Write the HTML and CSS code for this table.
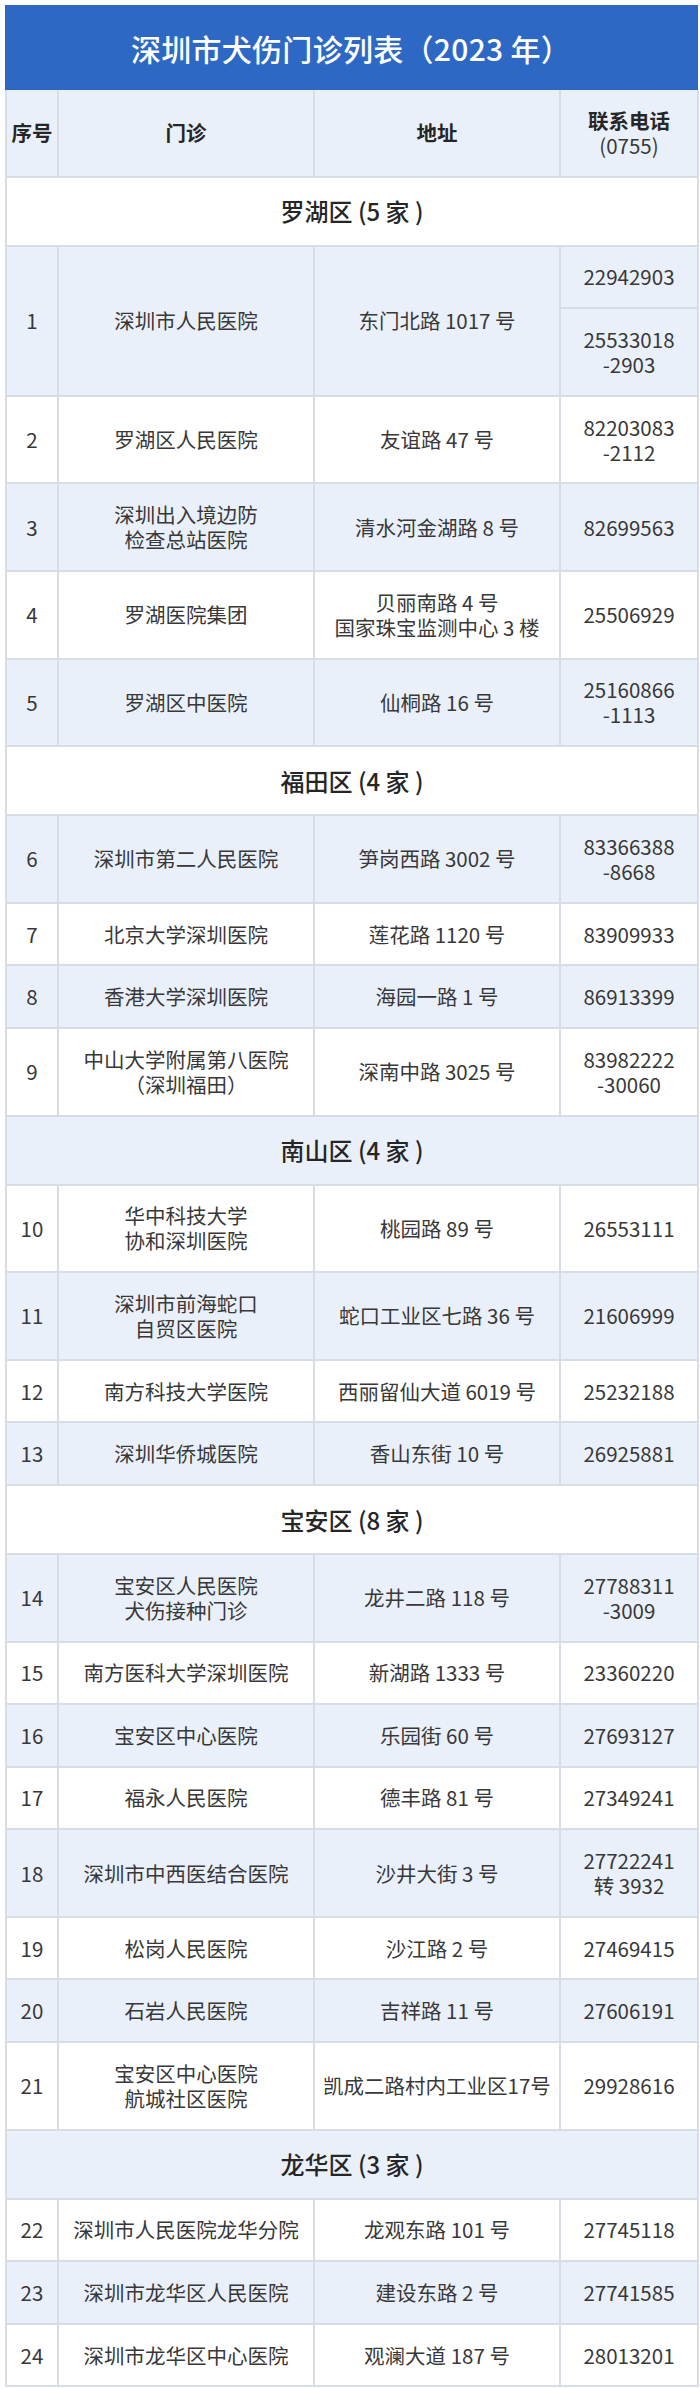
FILE: index.html
```html
<!DOCTYPE html>
<html lang="zh-CN">
<head>
<meta charset="utf-8">
<title>深圳市犬伤门诊列表（2023 年）</title>
<link rel="stylesheet" href="styles.css">
</head>
<body>
<div class="page">
  <div class="title">深圳市犬伤门诊列表（2023 年）</div>
  <table class="list">
    <colgroup>
      <col class="c-no"><col class="c-name"><col class="c-addr"><col class="c-tel">
    </colgroup>
    <thead>
      <tr class="alt">
        <th>序号</th><th>门诊</th><th>地址</th><th>联系电话<br><span class="area">(0755)</span></th>
      </tr>
    </thead>
    <tbody>
      <tr class="sec"><td colspan="4">罗湖区 (5 家 )</td></tr>
      <tr class="alt"><td rowspan="2">1</td><td rowspan="2">深圳市人民医院</td><td rowspan="2">东门北路 1017 号</td><td>22942903</td></tr>
      <tr class="alt"><td>25533018<br>-2903</td></tr>
      <tr><td>2</td><td>罗湖区人民医院</td><td>友谊路 47 号</td><td>82203083<br>-2112</td></tr>
      <tr class="alt"><td>3</td><td>深圳出入境边防<br>检查总站医院</td><td>清水河金湖路 8 号</td><td>82699563</td></tr>
      <tr><td>4</td><td>罗湖医院集团</td><td>贝丽南路 4 号<br>国家珠宝监测中心 3 楼</td><td>25506929</td></tr>
      <tr class="alt"><td>5</td><td>罗湖区中医院</td><td>仙桐路 16 号</td><td>25160866<br>-1113</td></tr>

      <tr class="sec"><td colspan="4">福田区 (4 家 )</td></tr>
      <tr class="alt"><td>6</td><td>深圳市第二人民医院</td><td>笋岗西路 3002 号</td><td>83366388<br>-8668</td></tr>
      <tr><td>7</td><td>北京大学深圳医院</td><td>莲花路 1120 号</td><td>83909933</td></tr>
      <tr class="alt"><td>8</td><td>香港大学深圳医院</td><td>海园一路 1 号</td><td>86913399</td></tr>
      <tr><td>9</td><td>中山大学附属第八医院<br>（深圳福田）</td><td>深南中路 3025 号</td><td>83982222<br>-30060</td></tr>

      <tr class="sec alt"><td colspan="4">南山区 (4 家 )</td></tr>
      <tr><td>10</td><td>华中科技大学<br>协和深圳医院</td><td>桃园路 89 号</td><td>26553111</td></tr>
      <tr class="alt"><td>11</td><td>深圳市前海蛇口<br>自贸区医院</td><td>蛇口工业区七路 36 号</td><td>21606999</td></tr>
      <tr><td>12</td><td>南方科技大学医院</td><td>西丽留仙大道 6019 号</td><td>25232188</td></tr>
      <tr class="alt"><td>13</td><td>深圳华侨城医院</td><td>香山东街 10 号</td><td>26925881</td></tr>

      <tr class="sec"><td colspan="4">宝安区 (8 家 )</td></tr>
      <tr class="alt"><td>14</td><td>宝安区人民医院<br>犬伤接种门诊</td><td>龙井二路 118 号</td><td>27788311<br>-3009</td></tr>
      <tr><td>15</td><td>南方医科大学深圳医院</td><td>新湖路 1333 号</td><td>23360220</td></tr>
      <tr class="alt"><td>16</td><td>宝安区中心医院</td><td>乐园街 60 号</td><td>27693127</td></tr>
      <tr><td>17</td><td>福永人民医院</td><td>德丰路 81 号</td><td>27349241</td></tr>
      <tr class="alt"><td>18</td><td>深圳市中西医结合医院</td><td>沙井大街 3 号</td><td>27722241<br>转 3932</td></tr>
      <tr><td>19</td><td>松岗人民医院</td><td>沙江路 2 号</td><td>27469415</td></tr>
      <tr class="alt"><td>20</td><td>石岩人民医院</td><td>吉祥路 11 号</td><td>27606191</td></tr>
      <tr><td>21</td><td>宝安区中心医院<br>航城社区医院</td><td>凯成二路村内工业区17号</td><td>29928616</td></tr>

      <tr class="sec alt"><td colspan="4">龙华区 (3 家 )</td></tr>
      <tr><td>22</td><td>深圳市人民医院龙华分院</td><td>龙观东路 101 号</td><td>27745118</td></tr>
      <tr class="alt"><td>23</td><td>深圳市龙华区人民医院</td><td>建设东路 2 号</td><td>27741585</td></tr>
      <tr><td>24</td><td>深圳市龙华区中心医院</td><td>观澜大道 187 号</td><td>28013201</td></tr>
    </tbody>
  </table>
</div>
</body>
</html>
```

FILE: styles.css
```css
html, body {
  background: #ffffff;
}
body {
  margin: 5px 0 0 5px;
  font-family: "Noto Sans CJK SC", "Noto Sans", "DejaVu Sans", sans-serif;
  color: #383838;
}
.page {
  width: 692px;
}
.title {
  margin: 0 -1px;
  height: 85px;
  background: #2e68c5;
  color: #ffffff;
  font-size: 30px;
  font-weight: 500;
  display: flex;
  align-items: center;
  justify-content: center;
  letter-spacing: 0.3px;
}
.list {
  width: 692px;
  border-collapse: collapse;
  table-layout: fixed;
  font-size: 20.5px;
  line-height: 25px;
}
.c-no { width: 52px; }
.c-name { width: 256px; }
.c-addr { width: 246px; }
.c-tel { width: 138px; }
.list th,
.list td {
  border: 2px solid #d7dce5;
  padding: 17.8px 3px;
  text-align: center;
  vertical-align: middle;
  white-space: nowrap;
}
.list thead th {
  border-top: none;
  font-weight: 700;
  color: #262626;
}
.list thead th .area {
  font-weight: 400;
  color: #383838;
}
.list tr.alt {
  background: #eaf0fa;
}
.list tr.sec td {
  font-size: 24px;
  line-height: 31.4px;
  font-weight: 500;
  color: #262626;
}
```
